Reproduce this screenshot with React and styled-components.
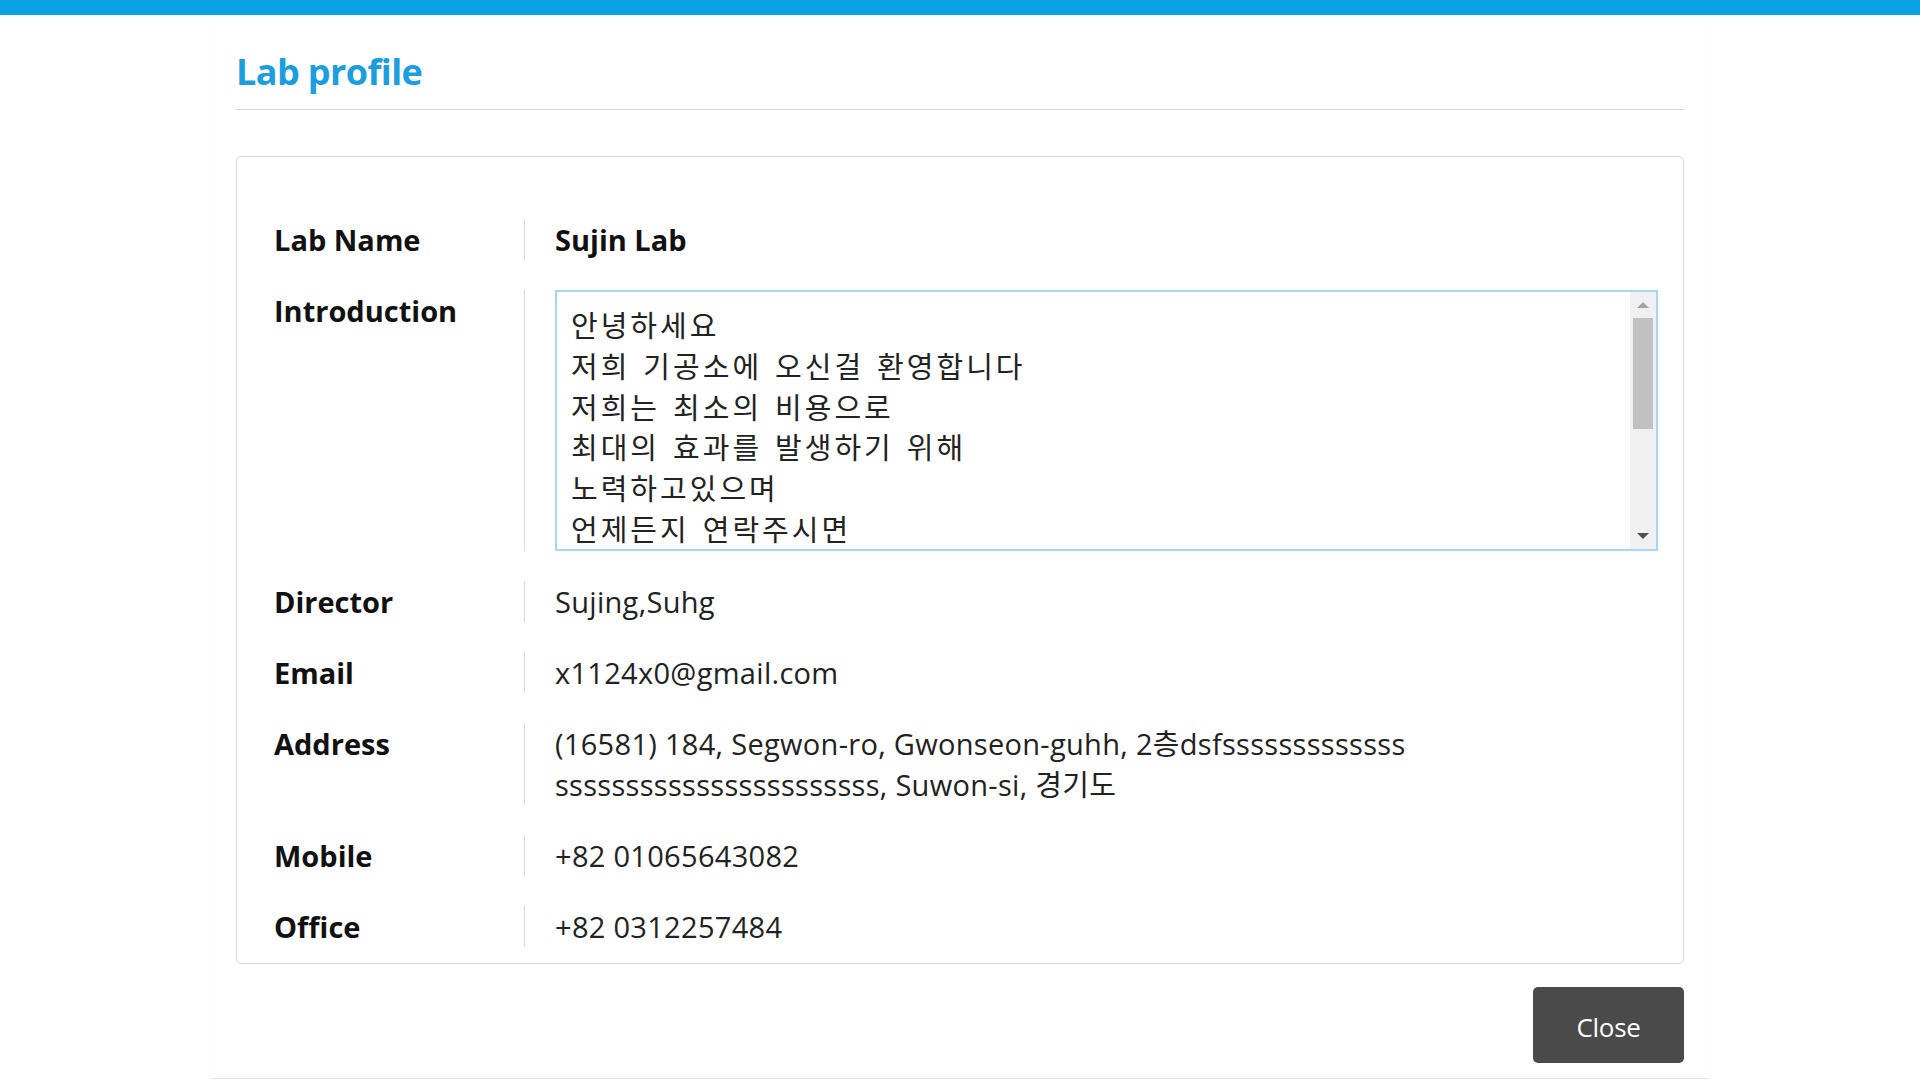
import React from "react";
import styled, { createGlobalStyle } from "styled-components";

const GlobalStyle = createGlobalStyle`
  html, body {
    margin: 0;
    padding: 0;
    background: #ffffff;
    overflow: hidden;
  }
  body {
    font-family: "Open Sans", "Noto Sans CJK KR", sans-serif;
    color: #222222;
  }
  * { box-sizing: border-box; }
`;

const TopBar = styled.div`
  height: 15px;
  background: #09a2e5;
`;

const Modal = styled.section`
  width: 1500px;
  margin: 0 auto;
  padding: 0 26px 15px;
  border-bottom: 1px solid #e6e6e6;
  box-shadow: 0 1px 2px rgba(0, 0, 0, 0.03);
`;

const Header = styled.header`
  padding-top: 35px;
  padding-bottom: 15px;
  border-bottom: 1px solid #d9d9d9;
`;

const Title = styled.h1`
  margin: 0;
  font-family: "Open Sans", "Noto Sans CJK KR", sans-serif;
  font-size: 36px;
  line-height: 44px;
  font-weight: 700;
  color: #1b9de0;
  letter-spacing: -0.6px;
`;

const Card = styled.div`
  margin-top: 46px;
  border: 1px solid #d7d7d7;
  border-radius: 5px;
  padding: 62px 25px 16px 37px;
  display: flex;
  flex-direction: column;
  gap: 30px;
`;

const Row = styled.div`
  display: flex;
  align-items: stretch;
`;

const Label = styled.div`
  flex: 0 0 250px;
  font-size: 29px;
  line-height: 41px;
  font-weight: 700;
  color: #111111;
  letter-spacing: 0;
`;

const Value = styled.div`
  flex: 1;
  min-width: 0;
  border-left: 1px solid #d9d9d9;
  padding-left: 30px;
  font-size: 29px;
  line-height: 41px;
  font-weight: ${(p) => (p.$strong ? 700 : 400)};
  color: ${(p) => (p.$strong ? "#111111" : "#222222")};
  letter-spacing: ${(p) => (p.$strong ? "0" : "0.3px")};
  overflow-wrap: anywhere;
`;

const IntroBox = styled.div`
  display: flex;
  height: 261px;
  border: 2px solid #a9d6f5;
  background: #ffffff;
`;

const IntroText = styled.textarea`
  flex: 1;
  min-width: 0;
  margin: 0;
  padding: 12px 12px 10px 14px;
  border: none;
  outline: none;
  resize: none;
  background: transparent;
  font-family: "Noto Sans CJK KR", "Noto Sans", sans-serif;
  font-size: 29px;
  line-height: 40.8px;
  letter-spacing: 3px;
  word-spacing: 3.5px;
  color: #222222;
  overflow: hidden;
`;

const ScrollRail = styled.div`
  flex: 0 0 26px;
  display: flex;
  flex-direction: column;
  background: #f0f0f0;
`;

const ScrollArrow = styled.div`
  flex: 0 0 26px;
  display: flex;
  align-items: center;
  justify-content: center;

  &::before {
    content: "";
    width: 0;
    height: 0;
    border-left: 6px solid transparent;
    border-right: 6px solid transparent;
    ${(p) =>
      p.$dir === "up"
        ? "border-bottom: 6px solid #a3a3a3;"
        : "border-top: 6px solid #505050;"}
  }
`;

const ScrollTrack = styled.div`
  flex: 1;
  padding: 0 3px;
`;

const ScrollThumb = styled.div`
  height: 111px;
  background: #c1c1c1;
`;

const Footer = styled.div`
  display: flex;
  justify-content: flex-end;
  margin-top: 23px;
`;

const CloseButton = styled.button`
  width: 151px;
  height: 76px;
  padding: 3px 0 0;
  border: none;
  border-radius: 5px;
  background: #4a4a4a;
  color: #ffffff;
  font-family: "Open Sans", sans-serif;
  font-size: 26px;
  letter-spacing: -0.3px;
  cursor: pointer;
`;

const intro = [
  "안녕하세요",
  "저희 기공소에 오신걸 환영합니다",
  "저희는 최소의 비용으로",
  "최대의 효과를 발생하기 위해",
  "노력하고있으며",
  "언제든지 연락주시면",
  "친절하게 상담해 드리겠습니다",
  "감사합니다",
].join("\n");

const rows = [
  { label: "Director", value: "Sujing,Suhg" },
  { label: "Email", value: "x1124x0@gmail.com" },
  {
    label: "Address",
    value:
      "(16581) 184, Segwon-ro, Gwonseon-guhh, 2층dsfsssssssssssss sssssssssssssssssssssss, Suwon-si, 경기도",
  },
  { label: "Mobile", value: "+82 01065643082" },
  { label: "Office", value: "+82 0312257484" },
];

export default function App() {
  return (
    <>
      <GlobalStyle />
      <TopBar />
      <Modal>
        <Header>
          <Title>Lab profile</Title>
        </Header>
        <Card>
          <Row>
            <Label>Lab Name</Label>
            <Value $strong>Sujin Lab</Value>
          </Row>
          <Row>
            <Label>Introduction</Label>
            <Value>
              <IntroBox>
                <IntroText defaultValue={intro} readOnly />
                <ScrollRail aria-hidden="true">
                  <ScrollArrow $dir="up" />
                  <ScrollTrack>
                    <ScrollThumb />
                  </ScrollTrack>
                  <ScrollArrow $dir="down" />
                </ScrollRail>
              </IntroBox>
            </Value>
          </Row>
          {rows.map((r) => (
            <Row key={r.label}>
              <Label>{r.label}</Label>
              <Value>{r.value}</Value>
            </Row>
          ))}
        </Card>
        <Footer>
          <CloseButton type="button">Close</CloseButton>
        </Footer>
      </Modal>
    </>
  );
}
